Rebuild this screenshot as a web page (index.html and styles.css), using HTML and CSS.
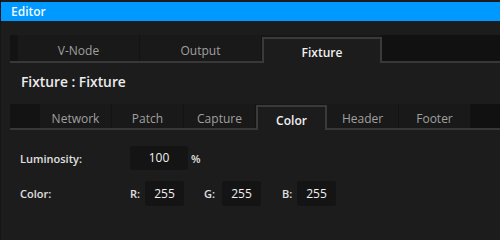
FILE: index.html
```html
<!DOCTYPE html>
<html>
<head>
<meta charset="utf-8">
<link rel="stylesheet" href="styles.css">
</head>
<body>
<div class="window">
  <div class="titlebar">Editor</div>
  <div class="tabs tabs-main">
    <div class="spacer"></div>
    <div class="tab">V-Node</div>
    <div class="tab">Output</div>
    <div class="tab active">Fixture</div>
    <div class="fill"></div>
  </div>
  <div class="heading">Fixture : Fixture</div>
  <div class="tabs tabs-sub">
    <div class="spacer"></div>
    <div class="tab">Network</div>
    <div class="tab">Patch</div>
    <div class="tab">Capture</div>
    <div class="tab active">Color</div>
    <div class="tab">Header</div>
    <div class="tab">Footer</div>
    <div class="fill"></div>
  </div>
  <div class="form">
    <div class="row row-lum">
      <div class="label">Luminosity:</div>
      <div class="field field-lum">100</div>
      <div class="unit">%</div>
    </div>
    <div class="row row-color">
      <div class="label">Color:</div>
      <div class="ch ch-r">R:</div>
      <div class="field field-ch">255</div>
      <div class="ch ch-g">G:</div>
      <div class="field field-ch">255</div>
      <div class="ch ch-b">B:</div>
      <div class="field field-ch">255</div>
    </div>
  </div>
</div>
</body>
</html>
```
FILE: styles.css
```css
html, body {
  margin: 0;
  padding: 0;
  background: #1c1c1c;
}
body {
  width: 500px;
  height: 240px;
  overflow: hidden;
  font-family: "Open Sans", "Noto Sans", sans-serif;
  color: #e6e6e6;
}
.window {
  height: 240px;
  padding-top: 2px;
  box-sizing: border-box;
  background: #1c1c1c;
  border-left: 1px solid #151515;
}
.titlebar {
  height: 19px;
  line-height: 19px;
  background: #0099ff;
  color: #f2f8ff;
  font-size: 12px;
  font-weight: 600;
  padding-left: 10px;
}
.tabs {
  display: flex;
  margin-left: 9px;
  background: #161616;
  border-bottom: 2px solid #383838;
  box-sizing: border-box;
}
.tabs-main {
  margin-top: 14px;
  height: 28px;
}
.tabs-sub {
  margin-top: 14px;
  height: 26px;
}
.spacer {
  background: #131313;
}
.tabs-main .spacer { width: 8px; }
.tabs-sub .spacer { width: 30px; }
.tab {
  display: flex;
  align-items: center;
  justify-content: center;
  background: #191919;
  border-right: 1px solid #131313;
  color: #a0a0a0;
  font-size: 12px;
  box-sizing: border-box;
}
.tabs-main .tab { width: 122px; padding-top: 5px; }
.tabs-sub .tab { width: 72px; padding-top: 5px; }
.tab.active {
  background: #1c1c1c;
  color: #f0f0f0;
  font-weight: 600;
  border: 2px solid #3a3a3a;
  border-bottom: none;
  margin-bottom: -2px;
}
.tabs-main .tab.active { margin-top: 2px; width: 120px; padding-top: 3px; }
.tabs-sub .tab.active { margin-top: 1px; width: 71px; padding-top: 4px; }
.fill {
  flex: 1;
  background: #111111;
}
.heading {
  margin: 11px 0 0 20px;
  font-size: 13.8px;
  font-weight: 600;
  color: #ececec;
  height: 16px;
  line-height: 16px;
}
.form {
  padding-left: 19px;
  margin-top: 16px;
}
.row {
  display: flex;
  align-items: center;
  font-size: 11px;
  font-weight: 600;
  color: #e0e0e0;
}
.row-color {
  margin-top: 11px;
}
.label {
  width: 110px;
}
.field {
  height: 24px;
  line-height: 24px;
  background: #141414;
  border-radius: 3px;
  text-align: center;
  font-size: 12px;
  font-weight: 400;
  color: #f0f0f0;
}
.row-color .field { height: 25px; line-height: 25px; }
.field-lum { width: 58px; }
.unit { margin-left: 3px; }
.ch { width: 15px; }
.ch-g { margin-left: 20px; width: 18px; }
.ch-b { margin-left: 21px; }
.field-ch { width: 39px; }
```
